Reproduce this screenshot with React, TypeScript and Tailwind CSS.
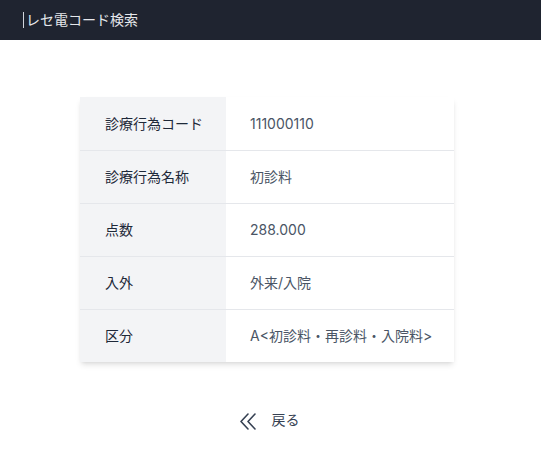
const rows = [
  { label: "診療行為コード", value: "111000110" },
  { label: "診療行為名称", value: "初診料" },
  { label: "点数", value: "288.000" },
  { label: "入外", value: "外来/入院" },
  { label: "区分", value: "A<初診料・再診料・入院料>" },
];

export default function App() {
  return (
    <div
      className="min-h-[449px] bg-white"
      style={{ fontFamily: 'Inter, "Noto Sans CJK JP", sans-serif' }}
    >
      <header className="h-10 bg-[#1f2430] flex items-center pl-[23px]">
        <span className="border-l border-gray-300 pl-[2px] text-[14px] leading-4 text-gray-200">
          レセ電コード検索
        </span>
      </header>

      <main className="flex flex-col items-center pt-[57px]">
        <table className="w-[374px] border-collapse shadow-md ml-[-7px] text-[14px]">
          <tbody>
            {rows.map((row, i) => (
              <tr
                key={row.label}
                className={i < rows.length - 1 ? "border-b border-gray-200" : ""}
              >
                <th className="w-[146px] h-[53px] bg-gray-100 text-left font-normal text-gray-800 pl-[25px]">
                  {row.label}
                </th>
                <td className="h-[53px] text-gray-600 pl-[24px]">{row.value}</td>
              </tr>
            ))}
          </tbody>
        </table>

        <button className="mt-[47px] ml-[-3px] flex items-center gap-[15px] text-[14px] text-gray-700">
          {/* double chevron */}
          <svg
            viewBox="0 0 18 17"
            className="w-[18px] h-[17px] mt-[4px]"
            fill="none"
            stroke="currentColor"
            strokeWidth="1.6"
            strokeLinecap="round"
            strokeLinejoin="round"
          >
            <path d="M9 1 L2 8.5 L9 16 M16 1 L9 8.5 L16 16" />
          </svg>
          <span>戻る</span>
        </button>
      </main>
    </div>
  );
}
